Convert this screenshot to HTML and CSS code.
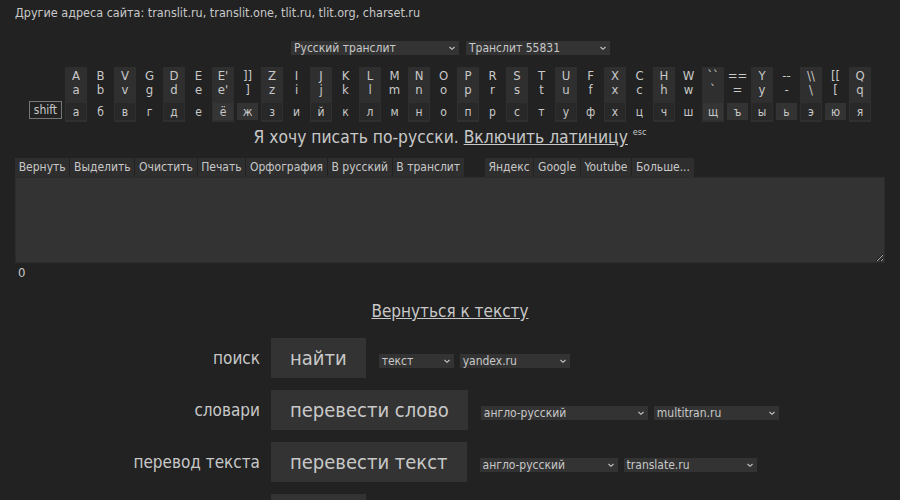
FILE: index.html
```html
<!DOCTYPE html>
<html lang="ru">
<head>
<meta charset="utf-8">
<title>Транслит</title>
<link rel="stylesheet" href="styles.css">
</head>
<body>
<div class="sites">Другие адреса сайта: translit.ru, translit.one, tlit.ru, tlit.org, charset.ru</div>

<div class="langs">
  <div class="sel w168"><span>Русский транслит</span><svg viewBox="0 0 8 6"><path d="M1.5 2 L4 4.3 L6.5 2" /></svg></div>
  <div class="sel w144"><span>Транслит 55831</span><svg viewBox="0 0 8 6"><path d="M1.5 2 L4 4.3 L6.5 2" /></svg></div>
</div>

<div class="keyboard">
  <div class="shiftcol"><span class="shift">shift</span></div>
  <div class="key odd"><div class="lat">A<br>a</div><div class="cyr"><span>а</span></div></div>
  <div class="key"><div class="lat">B<br>b</div><div class="cyr"><span>б</span></div></div>
  <div class="key odd"><div class="lat">V<br>v</div><div class="cyr"><span>в</span></div></div>
  <div class="key"><div class="lat">G<br>g</div><div class="cyr"><span>г</span></div></div>
  <div class="key odd"><div class="lat">D<br>d</div><div class="cyr"><span>д</span></div></div>
  <div class="key"><div class="lat">E<br>e</div><div class="cyr"><span>е</span></div></div>
  <div class="key odd multi"><div class="lat">E'<br>e'</div><div class="cyr"><span>ё</span></div></div>
  <div class="key multi"><div class="lat">]]<br>]</div><div class="cyr"><span>ж</span></div></div>
  <div class="key odd"><div class="lat">Z<br>z</div><div class="cyr"><span>з</span></div></div>
  <div class="key"><div class="lat">I<br>i</div><div class="cyr"><span>и</span></div></div>
  <div class="key odd"><div class="lat">J<br>j</div><div class="cyr"><span>й</span></div></div>
  <div class="key"><div class="lat">K<br>k</div><div class="cyr"><span>к</span></div></div>
  <div class="key odd"><div class="lat">L<br>l</div><div class="cyr"><span>л</span></div></div>
  <div class="key"><div class="lat">M<br>m</div><div class="cyr"><span>м</span></div></div>
  <div class="key odd"><div class="lat">N<br>n</div><div class="cyr"><span>н</span></div></div>
  <div class="key"><div class="lat">O<br>o</div><div class="cyr"><span>о</span></div></div>
  <div class="key odd"><div class="lat">P<br>p</div><div class="cyr"><span>п</span></div></div>
  <div class="key"><div class="lat">R<br>r</div><div class="cyr"><span>р</span></div></div>
  <div class="key odd"><div class="lat">S<br>s</div><div class="cyr"><span>с</span></div></div>
  <div class="key"><div class="lat">T<br>t</div><div class="cyr"><span>т</span></div></div>
  <div class="key odd"><div class="lat">U<br>u</div><div class="cyr"><span>у</span></div></div>
  <div class="key"><div class="lat">F<br>f</div><div class="cyr"><span>ф</span></div></div>
  <div class="key odd"><div class="lat">X<br>x</div><div class="cyr"><span>х</span></div></div>
  <div class="key"><div class="lat">C<br>c</div><div class="cyr"><span>ц</span></div></div>
  <div class="key odd"><div class="lat">H<br>h</div><div class="cyr"><span>ч</span></div></div>
  <div class="key"><div class="lat">W<br>w</div><div class="cyr"><span>ш</span></div></div>
  <div class="key odd multi"><div class="lat">``<br>`</div><div class="cyr"><span>щ</span></div></div>
  <div class="key multi"><div class="lat">==<br>=</div><div class="cyr"><span>ъ</span></div></div>
  <div class="key odd"><div class="lat">Y<br>y</div><div class="cyr"><span>ы</span></div></div>
  <div class="key multi"><div class="lat">--<br>-</div><div class="cyr"><span>ь</span></div></div>
  <div class="key odd"><div class="lat">\\<br>\</div><div class="cyr"><span>э</span></div></div>
  <div class="key multi"><div class="lat">[[<br>[</div><div class="cyr"><span>ю</span></div></div>
  <div class="key odd"><div class="lat">Q<br>q</div><div class="cyr"><span>я</span></div></div>
</div>

<div class="mode">Я хочу писать по-русски. <a href="#">Включить латиницу</a> <sup>esc</sup></div>

<div class="toolbar">
  <div class="group">
    <span class="tb">Вернуть</span><span class="tb">Выделить</span><span class="tb">Очистить</span><span class="tb">Печать</span><span class="tb">Орфография</span><span class="tb">В русский</span><span class="tb">В транслит</span>
  </div>
  <div class="group">
    <span class="tb">Яндекс</span><span class="tb">Google</span><span class="tb">Youtube</span><span class="tb">Больше...</span>
  </div>
</div>
<textarea class="editor"></textarea>
<div class="count">0</div>

<div class="back"><a href="#">Вернуться к тексту</a></div>

<div class="tools">
  <div class="row">
    <div class="label">поиск</div>
    <div class="btn">найти</div>
    <div class="opts">
      <div class="sel w75"><span>текст</span><svg viewBox="0 0 8 6"><path d="M1.5 2 L4 4.3 L6.5 2" /></svg></div>
      <div class="sel w110"><span>yandex.ru</span><svg viewBox="0 0 8 6"><path d="M1.5 2 L4 4.3 L6.5 2" /></svg></div>
    </div>
  </div>
  <div class="row">
    <div class="label">словари</div>
    <div class="btn">перевести слово</div>
    <div class="opts">
      <div class="sel w167"><span>англо-русский</span><svg viewBox="0 0 8 6"><path d="M1.5 2 L4 4.3 L6.5 2" /></svg></div>
      <div class="sel w125"><span>multitran.ru</span><svg viewBox="0 0 8 6"><path d="M1.5 2 L4 4.3 L6.5 2" /></svg></div>
    </div>
  </div>
  <div class="row">
    <div class="label">перевод текста</div>
    <div class="btn">перевести текст</div>
    <div class="opts">
      <div class="sel w138"><span>англо-русский</span><svg viewBox="0 0 8 6"><path d="M1.5 2 L4 4.3 L6.5 2" /></svg></div>
      <div class="sel w133"><span>translate.ru</span><svg viewBox="0 0 8 6"><path d="M1.5 2 L4 4.3 L6.5 2" /></svg></div>
    </div>
  </div>
  <div class="row">
    <div class="label">онлайн</div>
    <div class="btn">найти</div>
    <div class="opts"></div>
  </div>
</div>
</body>
</html>
```
FILE: styles.css
```css
html, body {
  margin: 0;
  padding: 0;
  background: #222222;
}
body {
  color: #c8c8c8;
  font-family: "DejaVu Sans Condensed", "DejaVu Sans", sans-serif;
  font-size: 13px;
}
a {
  color: #c8c8c8;
}
.sites {
  padding: 5px 15px 0;
  height: 18px;
  line-height: 16px;
  font-size: 12.5px;
}
.langs {
  display: flex;
  justify-content: center;
  gap: 7px;
  margin-top: 18px;
  padding-left: 1px;
}
.sel {
  display: inline-flex;
  align-items: center;
  justify-content: space-between;
  height: 14px;
  background: #333333;
  color: #c8c8c8;
  font-size: 12px;
  line-height: 14px;
  padding: 0 3px 0 3px;
  box-sizing: border-box;
}
.sel svg {
  width: 8px;
  height: 6px;
  fill: none;
  stroke: #c8c8c8;
  stroke-width: 1.1;
}
.w168 { width: 168px; }
.w144 { width: 144px; }
.w75 { width: 75px; }
.w110 { width: 110px; }
.w167 { width: 167px; }
.w125 { width: 125px; }
.w138 { width: 138px; }
.w133 { width: 133px; }

.keyboard {
  display: grid;
  grid-template-columns: 34px repeat(33, 22.5px);
  column-gap: 2px;
  justify-content: center;
  margin-top: 12px;
}
.shiftcol {
  display: flex;
  align-items: flex-end;
  padding-bottom: 3px;
}
.shift {
  display: block;
  border: 1px solid #777;
  padding: 0 4px;
  height: 16px;
  line-height: 16px;
  font-size: 12px;
  color: #c8c8c8;
}
.key {
  display: flex;
  flex-direction: column;
  align-items: stretch;
  height: 55px;
  text-align: center;
}
.key.odd {
  background: #2f2f2f;
}
.lat {
  padding-top: 2px;
  line-height: 14px;
  font-size: 13px;
  height: 32px;
}
.cyr {
  padding: 2px 1px;
  flex: 1;
  display: flex;
}
.cyr span {
  flex: 1;
  display: flex;
  align-items: center;
  justify-content: center;
  font-size: 12px;
}
.key.odd .cyr span {
  background: #282828;
}
.key.multi .cyr span {
  background: #333333;
}
.key.odd.multi .cyr span {
  background: #353535;
}

.mode {
  text-align: center;
  font-size: 17.3px;
  line-height: 20px;
  margin-top: 5px;
}
.mode sup {
  font-size: 9px;
  line-height: 0;
  vertical-align: 8px;
}

.toolbar {
  display: flex;
  gap: 21px;
  margin: 11px 15px 0;
}
.group {
  display: flex;
  gap: 1px;
}
.tb {
  background: #2e2e2e;
  font-size: 12px;
  line-height: 19px;
  height: 19px;
  padding: 0 3.7px;
}
.editor {
  display: block;
  margin: 0 15px;
  width: 870px;
  height: 86px;
  box-sizing: border-box;
  background: #333333;
  border: 1px solid #2c2c2c;
  color: #c8c8c8;
  resize: both;
  outline: none;
}
.count {
  padding: 2px 18px 0;
  font-size: 13px;
  line-height: 16px;
}
.back {
  text-align: center;
  font-size: 17px;
  line-height: 22px;
  margin-top: 19px;
}

.tools {
  display: flex;
  flex-direction: column;
  gap: 12px;
  margin-top: 16px;
}
.row {
  display: flex;
  align-items: center;
  gap: 11px;
}
.label {
  width: 260px;
  flex: none;
  text-align: right;
  font-size: 17px;
}
.btn {
  background: #333333;
  font-size: 20px;
  height: 40px;
  line-height: 40px;
  padding: 0 19px;
}
.opts {
  display: flex;
  gap: 6px;
  margin-top: 5px;
  padding-left: 2px;
}
```
